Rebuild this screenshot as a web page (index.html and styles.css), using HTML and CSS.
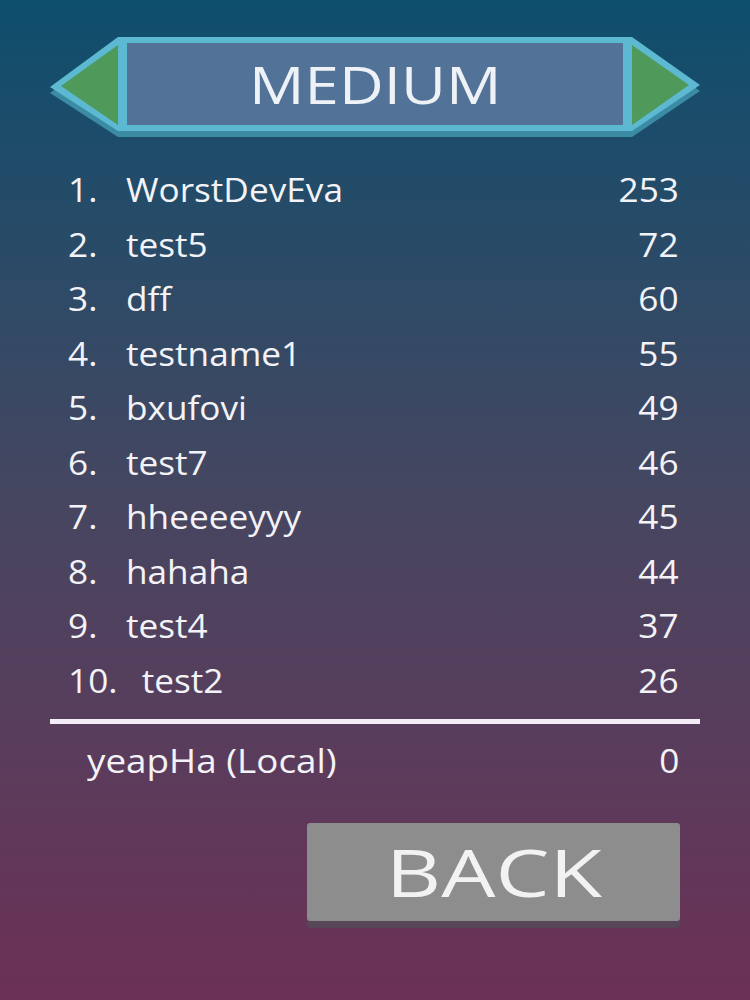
FILE: index.html
```html
<!DOCTYPE html>
<html>
<head>
<meta charset="utf-8">
<link rel="stylesheet" href="styles.css">
</head>
<body>
<div class="screen">
  <div class="banner">
    <svg class="banner-bg" viewBox="44 30 662 112" width="662" height="112">
      <polygon points="50,93 118,43 632,43 700,91 632,137 118,137" fill="#3b8ba5"/>
      <polygon points="50,87 118,37 632,37 700,85 632,131 118,131" fill="#5cb9d1"/>
      <polygon points="61,86 118,45 118,125" fill="#4f9a5b"/>
      <polygon points="632,45 632,125 689,85" fill="#4f9a5b"/>
      <rect x="127" y="43" width="496" height="82" fill="#527397"/>
    </svg>
    <div class="banner-title"><span class="stretch-c">MEDIUM</span></div>
  </div>

  <div class="board">
    <div class="row"><span class="player"><span class="rank">1.</span>WorstDevEva</span><span class="score">253</span></div>
    <div class="row"><span class="player"><span class="rank">2.</span>test5</span><span class="score">72</span></div>
    <div class="row"><span class="player"><span class="rank">3.</span>dff</span><span class="score">60</span></div>
    <div class="row"><span class="player"><span class="rank">4.</span>testname1</span><span class="score">55</span></div>
    <div class="row"><span class="player"><span class="rank">5.</span>bxufovi</span><span class="score">49</span></div>
    <div class="row"><span class="player"><span class="rank">6.</span>test7</span><span class="score">46</span></div>
    <div class="row"><span class="player"><span class="rank">7.</span>hheeeeyyy</span><span class="score">45</span></div>
    <div class="row"><span class="player"><span class="rank">8.</span>hahaha</span><span class="score">44</span></div>
    <div class="row"><span class="player"><span class="rank">9.</span>test4</span><span class="score">37</span></div>
    <div class="row"><span class="player"><span class="rank rank-wide">10.</span>test2</span><span class="score">26</span></div>
  </div>

  <div class="divider"></div>

  <div class="row local"><span class="player">yeapHa (Local)</span><span class="score">0</span></div>

  <div class="actions">
    <button class="back-btn"><span class="stretch-c back-label">BACK</span></button>
  </div>
</div>
</body>
</html>
```

FILE: styles.css
```css
html, body {
  margin: 0;
  padding: 0;
}

body {
  width: 750px;
  height: 1000px;
  overflow: hidden;
  background: linear-gradient(180deg, #0e4e6d 0%, #2f4a66 30%, #464660 50%, #5a3c5c 75%, #6b3055 100%);
  font-family: "Open Sans", "DejaVu Sans", sans-serif;
  color: #f3f3f7;
}

.screen {
  display: flex;
  flex-direction: column;
  padding-top: 30px;
}

.banner {
  position: relative;
  width: 662px;
  height: 112px;
  margin-left: 44px;
}

.banner-bg {
  position: absolute;
  left: 0;
  top: 0;
  display: block;
}

.banner-title {
  position: relative;
  padding-top: 24px;
  height: 60px;
  line-height: 60px;
  font-size: 51px;
  text-align: center;
  color: #eef2f7;
}

.stretch-c {
  display: inline-block;
  transform: scaleX(1.21);
  transform-origin: center;
}

.board {
  display: flex;
  flex-direction: column;
  margin-top: 21px;
  padding: 0 71px 0 68px;
}

.row {
  display: flex;
  justify-content: space-between;
  align-items: center;
  height: 54.5px;
  line-height: 54.5px;
  font-size: 32px;
}

.player {
  display: inline-block;
  transform: scaleX(1.1);
  transform-origin: left center;
}

.score {
  display: inline-block;
  transform: scaleX(1.1);
  transform-origin: right center;
}

.rank {
  display: inline-block;
  margin-right: 26px;
}

.rank-wide {
  margin-right: 22px;
}

.divider {
  margin: 11px 50px 0 50px;
  height: 5px;
  background: #f4ecf6;
}

.local {
  margin-top: 10px;
  padding: 0 71px 0 87px;
}

.local .player {
  transform: scaleX(1.15);
}

.actions {
  display: flex;
  justify-content: flex-end;
  padding-right: 70px;
  margin-top: 34px;
}

.back-btn {
  width: 373px;
  height: 98px;
  border: none;
  border-radius: 3px;
  background: #8d8d8d;
  box-shadow: 0 7px 0 #574657;
  padding: 0;
  display: flex;
  align-items: center;
  justify-content: center;
  font-family: "Open Sans", "DejaVu Sans", sans-serif;
  font-size: 65px;
  color: #f2f2f2;
}

.back-label {
  transform: scaleX(1.32);
}
```
